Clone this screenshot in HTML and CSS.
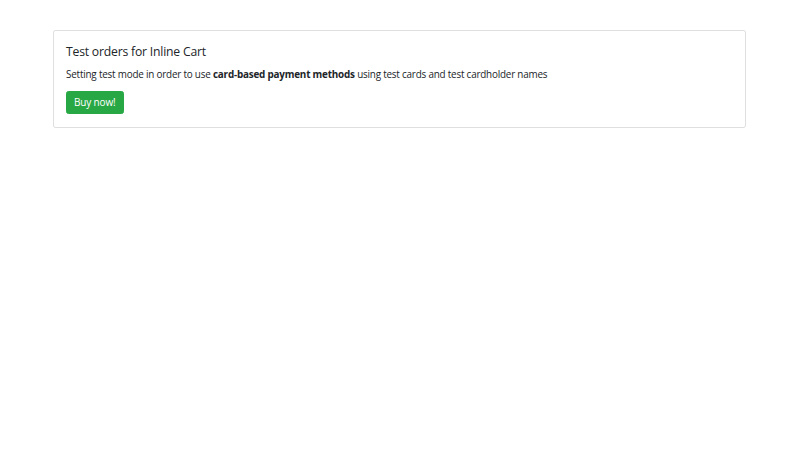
FILE: index.html
```html
<!DOCTYPE html>
<html lang="en">
<head>
<meta charset="utf-8">
<title>Test orders for Inline Cart</title>
<link rel="stylesheet" href="styles.css">
</head>
<body>
<div class="container">
  <div class="card">
    <h5 class="card-title">Test orders for Inline Cart</h5>
    <p class="card-text">Setting test mode in order to use <strong>card-based payment methods</strong> using test cards and test cardholder names</p>
    <button class="btn" type="button">Buy now!</button>
  </div>
</div>
</body>
</html>
```
FILE: styles.css
```css
html, body {
  margin: 0;
  padding: 0;
  background: #fff;
}
body {
  font-family: "Open Sans", "Noto Sans", "Liberation Sans", sans-serif;
  color: #212529;
  font-size: 9.9px;
  line-height: 15px;
  letter-spacing: -0.2px;
  padding: 30px 0 0 53px;
}
.container {
  width: 693px;
}
.card {
  border: 1px solid rgba(0,0,0,.125);
  border-radius: 2.5px;
  padding: 13px 12px;
}
.card-title {
  margin: 0 0 8px;
  font-size: 12.2px;
  line-height: 15px;
  font-weight: 400;
  letter-spacing: -0.2px;
}
.card-text {
  margin: 0 0 9px;
}
.card-text strong {
  font-weight: 700;
}
.btn {
  display: inline-block;
  font-family: inherit;
  font-size: 10px;
  letter-spacing: -0.15px;
  line-height: 15px;
  color: #fff;
  background: #28a745;
  border: 1px solid #28a745;
  border-radius: 2.5px;
  padding: 3px 7px;
  height: 23px;
  box-sizing: border-box;
  margin: 0;
  cursor: pointer;
}
```
